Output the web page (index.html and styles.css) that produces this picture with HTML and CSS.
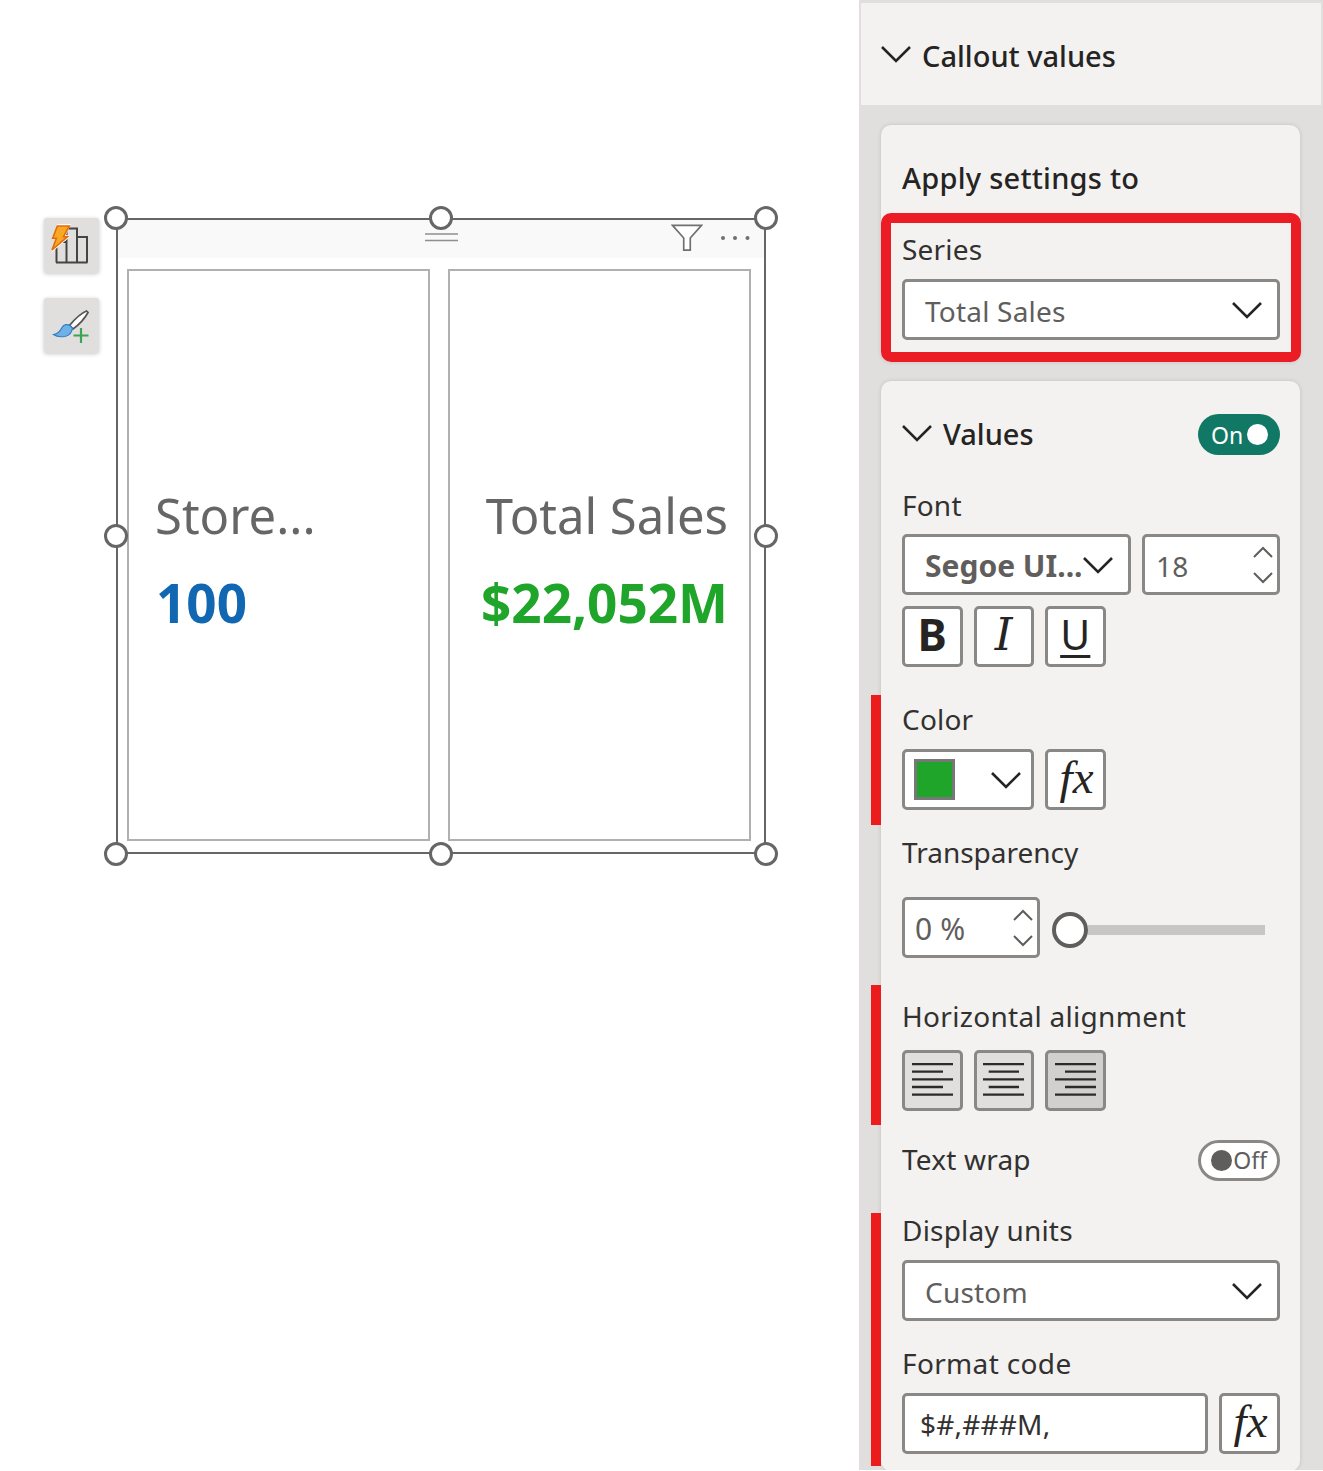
FILE: index.html
```html
<!DOCTYPE html>
<html lang="en">
<head>
<meta charset="utf-8">
<title>Callout values</title>
<link rel="stylesheet" href="styles.css">
</head>
<body>
<svg class="sprite" aria-hidden="true">
  <symbol id="chev" viewBox="0 0 30 18"><path d="M1 2 15 16 29 2" fill="none" stroke="currentColor" stroke-width="2.600"/></symbol>
  <symbol id="up" viewBox="0 0 20 12"><path d="M1 11 10 2l9 9" fill="none" stroke="currentColor" stroke-width="2"/></symbol>
  <symbol id="down" viewBox="0 0 20 12"><path d="M1 1l9 9 9-9" fill="none" stroke="currentColor" stroke-width="2"/></symbol>
</svg>
<main class="canvas">
  <div class="tools">
    <div class="tool">
      <svg viewBox="0 0 55 55" width="55" height="55">
        <path d="M12.500 44.500V24h10V44.500M22.500 44.500V10.500h10.500V44.500M33 44.500V19h10V44.500M12 44.500h31.500" fill="none" stroke="#444" stroke-width="2"/>
        <path d="M7 35 14 21 9 21 13 6h14l-5 11 5 1z" fill="#fff"/>
        <path d="M13.300 8H25.300L19.500 18.700h4L8 32 12.400 20.300H8.700z" fill="#f9a825" stroke="#e36c0a" stroke-width="1.600"/>
      </svg>
    </div>
    <div class="tool">
      <svg viewBox="0 0 55 55" width="55" height="55">
        <path d="M42.500 13c-5 2-12 8.500-17 14.500l3.500 3.500c5.500-4 12-11 15-16.500z" fill="#fff" stroke="#555" stroke-width="1.700"/>
        <path d="M9.500 36.500c4-.5 6.500-3 8.500-7 2-3.500 5.500-3.500 8-2l2.500 2.500c-.5 4-3 7.500-7.500 8.500-4 .5-8.500.5-11.500-2z" fill="#6fb0e6" stroke="#2f7fc4" stroke-width="1.200"/>
        <path d="M37 30v15M29.500 37.500h15" stroke="#3aa655" stroke-width="2.200" fill="none"/>
      </svg>
    </div>
  </div>
  <section class="visual">
    <span class="handle handle-tl"></span><span class="handle handle-tc"></span><span class="handle handle-tr"></span>
    <span class="handle handle-ml"></span><span class="handle handle-mr"></span>
    <span class="handle handle-bl"></span><span class="handle handle-bc"></span><span class="handle handle-br"></span>
    <header class="visual-head">
      <span></span>
      <svg class="grip" viewBox="0 0 33 9" width="33" height="9"><path d="M0 1h33M0 7.500h33" stroke="#8f8f8f" stroke-width="1.600"/></svg>
      <div class="head-actions">
        <svg class="funnel" viewBox="0 0 34 30" width="32" height="28"><path d="M1.500 1.500h31L20.500 15v13h-7V15z" fill="#fff" stroke="#707070" stroke-width="1.800"/></svg>
        <svg class="dots" viewBox="0 0 30 6" width="30" height="6"><circle cx="3" cy="3" r="2" fill="#707070"/><circle cx="15" cy="3" r="2" fill="#707070"/><circle cx="27.500" cy="3" r="2" fill="#707070"/></svg>
      </div>
    </header>
    <div class="cards">
      <div class="kpi">
        <div class="kpi-title">Store...</div>
        <div class="kpi-value kpi-blue">100</div>
      </div>
      <div class="kpi kpi-right">
        <div class="kpi-title">Total Sales</div>
        <div class="kpi-value kpi-green">$22,052M</div>
      </div>
    </div>
  </section>
</main>
<aside class="panel">
  <div class="section-head">
    <svg class="chev-lg"><use href="#chev"/></svg>
    <span>Callout values</span>
  </div>
  <div class="card card-apply">
    <div class="label label-strong">Apply settings to</div>
    <div class="highlight">
      <div class="label">Series</div>
      <div class="field select"><span>Total Sales</span><svg class="chev-lg"><use href="#chev"/></svg></div>
    </div>
  </div>
  <div class="card card-values">
    <div class="values-head">
      <svg class="chev-lg"><use href="#chev"/></svg>
      <span class="values-title">Values</span>
      <div class="toggle toggle-on"><span>On</span><i></i></div>
    </div>
    <div class="label label-font">Font</div>
    <div class="row">
      <div class="field select font-select"><b>Segoe UI...</b><svg class="chev-lg"><use href="#chev"/></svg></div>
      <div class="field spin size-spin"><span>18</span><div class="spinner"><svg><use href="#up"/></svg><svg><use href="#down"/></svg></div></div>
    </div>
    <div class="row row-biu">
      <div class="field btn btn-b">B</div>
      <div class="field btn btn-i">I</div>
      <div class="field btn btn-u">U</div>
    </div>
    <div class="marked marked-color">
      <div class="label">Color</div>
      <div class="row">
        <div class="field color-select"><i class="swatch"></i><svg class="chev-lg"><use href="#chev"/></svg></div>
        <div class="field btn fx">fx</div>
      </div>
    </div>
    <div class="label label-trans">Transparency</div>
    <div class="row row-slider">
      <div class="field spin pct-spin"><span>0 %</span><div class="spinner"><svg><use href="#up"/></svg><svg><use href="#down"/></svg></div></div>
      <div class="slider"><i class="thumb"></i><i class="track"></i></div>
    </div>
    <div class="marked marked-align">
      <div class="label label-align">Horizontal alignment</div>
      <div class="row">
        <div class="field btn btn-align">
          <svg viewBox="0 0 41 33" width="41" height="33"><path d="M0 1h41M0 8.700h31M0 16.300h41M0 24h31M0 31.700h41" stroke="#2b2b2b" stroke-width="2.300"/></svg>
        </div>
        <div class="field btn btn-align">
          <svg viewBox="0 0 41 33" width="41" height="33"><path d="M0 1h41M5.700 8.700H36M0 16.300h41M5.700 24H36M0 31.700h41" stroke="#2b2b2b" stroke-width="2.300"/></svg>
        </div>
        <div class="field btn btn-align btn-active">
          <svg viewBox="0 0 41 33" width="41" height="33"><path d="M0 1h41M10 8.700h31M0 16.300h41M10 24h31M0 31.700h41" stroke="#2b2b2b" stroke-width="2.300"/></svg>
        </div>
      </div>
    </div>
    <div class="wrap-row">
      <span class="label label-inline">Text wrap</span>
      <div class="toggle toggle-off"><i></i><span>Off</span></div>
    </div>
    <div class="marked marked-units">
      <div class="label">Display units</div>
      <div class="field select"><span>Custom</span><svg class="chev-lg"><use href="#chev"/></svg></div>
      <div class="label label-format">Format code</div>
      <div class="row">
        <div class="field format-input">$#,###M,</div>
        <div class="field btn fx">fx</div>
      </div>
    </div>
  </div>
</aside>
</body>
</html>
```

FILE: styles.css
```css
* { box-sizing: border-box; }
html, body { margin: 0; padding: 0; background: #fff; }
body {
  width: 1323px;
  height: 1471px;
  overflow: hidden;
  display: flex;
  align-items: flex-start;
  font-family: "Noto Sans", "Open Sans", sans-serif;
  color: #323130;
}
.sprite { display: none; }

/* canvas */
.canvas {
  width: 859px;
  flex: none;
  display: flex;
  align-items: flex-start;
  padding: 218px 0 0 44px;
  gap: 17px;
}
.tools { display: flex; flex-direction: column; gap: 25px; }
.tool {
  width: 55px;
  height: 55px;
  background: #e1dfdd;
  border-radius: 3px;
  box-shadow: 0 1px 4px rgba(0,0,0,.22);
}
.tool svg { display: block; }
.visual {
  position: relative;
  width: 650px;
  height: 636px;
  border: 2px solid #666;
  display: flex;
  flex-direction: column;
}
.handle {
  position: absolute;
  width: 24px;
  height: 24px;
  border: 3px solid #666;
  border-radius: 50%;
  background: #fff;
  z-index: 2;
}
.handle-tl { left: -14px; top: -14px; }
.handle-tc { left: 311px; top: -14px; }
.handle-tr { right: -14px; top: -14px; }
.handle-ml { left: -14px; top: 304px; }
.handle-mr { right: -14px; top: 304px; }
.handle-bl { left: -14px; bottom: -14px; }
.handle-bc { left: 311px; bottom: -14px; }
.handle-br { right: -14px; bottom: -14px; }
.visual-head {
  height: 38px;
  flex: none;
  background: #f9f9f9;
  display: grid;
  grid-template-columns: 1fr auto 1fr;
  align-items: start;
}
.grip { margin-top: 13px; display: block; }
.head-actions {
  display: flex;
  justify-content: flex-end;
  align-items: flex-start;
  padding: 4px 14px 0 0;
  gap: 17px;
}
.funnel { display: block; }
.dots { display: block; margin-top: 11px; }
.cards {
  flex: 1;
  display: flex;
  gap: 18px;
  padding: 11px 13px 11px 9px;
}
.kpi {
  width: 303px;
  border: 2.5px solid #b0b0b0;
  display: flex;
  flex-direction: column;
  justify-content: center;
  padding: 8px 21px 0 26px;
  gap: 28px;
}
.kpi-right { align-items: flex-end; }
.kpi-title {
  font-size: 49px;
  line-height: 60px;
  color: #666;
  white-space: nowrap;
}
.kpi-value {
  font-size: 53px;
  line-height: 60px;
  font-weight: 700;
  white-space: nowrap;
}
.kpi-blue { color: #1167b1; margin-left: 1px; }
.kpi-green { color: #1ea52a; }

/* panel */
.panel {
  width: 464px;
  height: 1470px;
  flex: none;
  background: #e1dfdd;
  padding: 3px 2px 0;
  overflow: hidden;
}
.section-head {
  height: 102px;
  background: #f3f2f1;
  display: flex;
  align-items: center;
  padding: 2px 0 0 20px;
  gap: 11px;
  font-size: 29px;
  font-weight: 500;
  color: #252423;
  margin-bottom: 20px;
}
.chev-lg { width: 30px; height: 18px; flex: none; display: block; color: #252423; }
.section-head .chev-lg { margin-top: -2px; }
.values-head .chev-lg { margin-top: -3px; }
.card {
  width: 419px;
  margin-left: 20px;
  background: #f3f2f1;
  border-radius: 10px;
  box-shadow: 0 0 4px rgba(0,0,0,.14);
}
.card-apply { padding: 36px 0 0; height: 237px; margin-bottom: 19px; }
.card-apply > .label { padding-left: 21px; margin-bottom: 16px; }
.highlight {
  width: 420px;
  border: 10px solid #ec1c24;
  border-radius: 10px;
  padding: 9px 11px 12px;
}
.card-values { padding: 33px 20px 5px 21px; }
.label {
  height: 36px;
  line-height: 34px;
  font-size: 28px;
  letter-spacing: .2px;
  margin-bottom: 11px;
  white-space: nowrap;
}
.label-strong { font-weight: 500; font-size: 29px; letter-spacing: .25px; color: #252423; }
.label-font { margin-top: 33px; margin-bottom: 10px; }
.label-trans { margin: 10px 0 26px; letter-spacing: 0; }
.label-align { margin-bottom: 15px; letter-spacing: .3px; }
.label-format { margin-top: 25px; letter-spacing: .35px; }
.label-inline { margin: 0; }
.field {
  height: 61px;
  background: #fff;
  border: 3px solid #8a8886;
  border-radius: 5px;
  display: flex;
  align-items: center;
  font-size: 28px;
  letter-spacing: .2px;
  color: #605e5c;
}
.select { justify-content: space-between; padding: 0 15px 0 20px; }
.select span, .select b, .spin span { margin-top: 2px; }
.row { display: flex; gap: 11px; }
.row-biu { margin-top: 11px; }
.row-slider { align-items: center; gap: 12px; }
.values-head { display: flex; align-items: center; height: 41px; }
.values-title { font-size: 29px; font-weight: 500; color: #252423; margin: -2px 0 0 11px; flex: 1; }
.toggle {
  width: 82px;
  height: 41px;
  border-radius: 21px;
  display: flex;
  align-items: center;
  font-size: 23px;
  flex: none;
}
.toggle-on { background: #117865; color: #fff; padding: 0 12px 0 13px; justify-content: space-between; }
.toggle-on i { width: 21px; height: 21px; border-radius: 50%; background: #fff; }
.toggle-off { background: #fff; border: 3px solid #8a8886; color: #605e5c; padding: 0 10px; justify-content: space-between; }
.toggle-off i { width: 21px; height: 21px; border-radius: 50%; background: #605e5c; }
.font-select { width: 229px; flex: none; padding: 0 15px 0 20px; font-size: 30px; letter-spacing: 0; }
.font-select b { font-weight: 700; }
.spin { justify-content: space-between; padding: 0 4px 0 11px; }
.size-spin { width: 138px; flex: none; }
.pct-spin { width: 138px; flex: none; padding-left: 10px; font-size: 30px; }
.spinner { display: flex; flex-direction: column; gap: 14px; color: #605e5c; }
.spinner svg { width: 20px; height: 12px; display: block; }
.btn { width: 60.5px; flex: none; justify-content: center; color: #252423; }
.btn-b { font-size: 44px; font-weight: 700; padding-bottom: 5px; }
.btn-i { font-family: "DejaVu Serif", serif; font-style: italic; font-size: 45px; padding-bottom: 5px; }
.btn-u { font-size: 41px; padding-bottom: 5px; text-decoration: underline; text-decoration-thickness: 3px; text-underline-offset: 5px; }
.fx { font-family: "Liberation Serif", serif; font-style: italic; font-size: 47px; padding: 0 0 6px 3px; }
.marked { position: relative; }
.marked::before {
  content: "";
  position: absolute;
  left: -31px;
  top: 0;
  bottom: 0;
  width: 10px;
  background: #ec1c1c;
}
.marked-color { margin-top: 28px; padding: 7px 0 15px; }
.marked-align { margin-top: 27px; padding: 14px 0 14px; }
.marked-units { margin-top: 33px; padding: 0 0 12px; }
.color-select { width: 132px; flex: none; padding: 0 10px 0 9px; justify-content: space-between; }
.swatch { width: 41px; height: 41px; background: #1ea52a; border: 3px solid #777; display: block; }
.slider { flex: 1; display: flex; align-items: center; padding-right: 15px; margin-top: 5px; }
.thumb { width: 36px; height: 36px; border: 4px solid #605e5c; border-radius: 50%; background: #fff; flex: none; }
.track { flex: 1; height: 10px; background: #c8c6c4; }
.btn-align { background: #e1dfdd; padding: 0 0 2px; }
.btn-align svg { display: block; }
.btn-active { background: #d2d0ce; }
.wrap-row { display: flex; align-items: center; justify-content: space-between; height: 40px; margin-top: 15px; }
.format-input { width: 306px; flex: none; padding: 0 15px; color: #323130; }
```
